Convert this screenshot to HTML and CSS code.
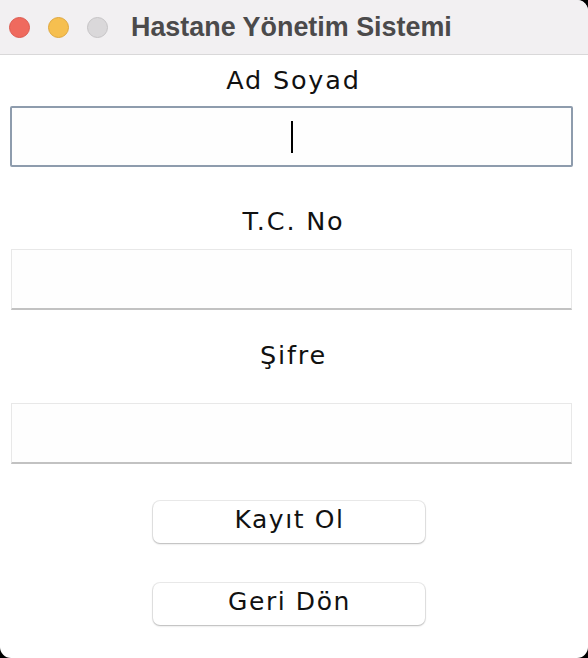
FILE: index.html
```html
<!DOCTYPE html>
<html lang="tr">
<head>
<meta charset="utf-8">
<title>Hastane Yönetim Sistemi</title>
<link rel="stylesheet" href="styles.css">
</head>
<body>
<div class="window">
  <div class="titlebar">
    <div class="lights">
      <span class="light red"></span>
      <span class="light yellow"></span>
      <span class="light gray"></span>
    </div>
    <div class="title">Hastane Yönetim Sistemi</div>
  </div>
  <div class="content">
    <div class="label l1">Ad Soyad</div>
    <div class="field focused"><span class="caret"></span></div>
    <div class="label l2">T.C. No</div>
    <div class="field"></div>
    <div class="label l3">Şifre</div>
    <div class="field f3"></div>
    <div class="buttons">
      <button class="btn">Kayıt Ol</button>
      <button class="btn">Geri Dön</button>
    </div>
  </div>
</div>
</body>
</html>
```

FILE: styles.css
```css
html, body {
  margin: 0;
  padding: 0;
  background: #000;
}
body {
  width: 588px;
  height: 658px;
  overflow: hidden;
}
.window {
  width: 588px;
  height: 658px;
  background: #fff;
  border-radius: 0 11px 11px 11px;
  overflow: hidden;
  display: flex;
  flex-direction: column;
}
.titlebar {
  height: 55px;
  flex: none;
  background: #f2f0f2;
  border-bottom: 1px solid #d9d8d9;
  display: flex;
  align-items: center;
  padding-left: 9px;
  box-sizing: border-box;
}
.lights {
  display: flex;
  gap: 18px;
}
.light {
  width: 21px;
  height: 21px;
  border-radius: 50%;
  box-sizing: border-box;
  display: block;
}
.red { background: #ef6a5e; border: 1px solid #dc5a50; }
.yellow { background: #f6bf4f; border: 1px solid #dfa73d; }
.gray { background: #dad8da; border: 1px solid #c6c4c6; }
.title {
  margin-left: 23px;
  font-family: "Liberation Sans", Arial, sans-serif;
  font-weight: bold;
  font-size: 26.9px;
  color: #4b4a4b;
}
.content {
  flex: 1;
  display: flex;
  flex-direction: column;
  padding: 0 16px 0 11px;
}
.label {
  height: 32px;
  line-height: 32px;
  text-align: center;
  font-family: "DejaVu Sans", sans-serif;
  font-size: 25.5px;
  letter-spacing: 1.8px;
  color: #111;
  padding-left: 4px;
}
.l1 { margin-top: 9px; margin-bottom: 10px; }
.l2 { margin-top: 38px; margin-bottom: 12px; }
.l3 { margin-top: 29px; margin-bottom: 32px; }
.field {
  height: 61px;
  box-sizing: border-box;
  border: 1px solid #e8e8e8;
  border-bottom: 2px solid #c2c2c2;
  background: #fefefe;
  display: flex;
  align-items: center;
  justify-content: center;
}
.field.focused {
  margin: 0 -1px;
  border: 2px solid #8e9cad;
  border-radius: 2px;
}
.caret {
  width: 2px;
  height: 32px;
  background: #000;
  display: block;
  margin-left: 1px;
}
.buttons {
  display: flex;
  flex-direction: column;
  align-items: center;
  gap: 40px;
  margin-top: 37px;
}
.btn {
  width: 272px;
  height: 42px;
  background: #fff;
  border: none;
  border-radius: 7px;
  box-shadow: 0 0 0 1px rgba(0,0,0,0.08), 0 1px 2px rgba(0,0,0,0.22);
  font-family: "DejaVu Sans", sans-serif;
  font-size: 25px;
  letter-spacing: 1.6px;
  color: #111;
  padding: 0 0 5px 2px;
  line-height: 30px;
  margin-left: -6px;
}
```
